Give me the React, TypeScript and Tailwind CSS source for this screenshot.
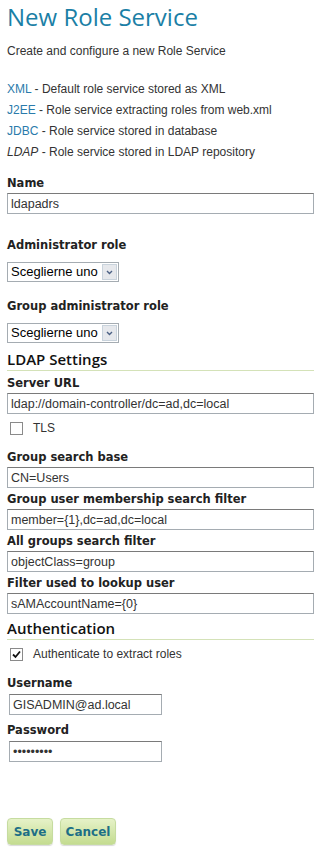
import { useState } from "react";

const body = "font-['Liberation_Sans',sans-serif]";
const label = "block font-['DejaVu_Sans',sans-serif] text-[11.5px] font-bold text-[#222] leading-[14px]";
const field =
  "block h-[21px] border border-[#a5acb2] border-t-[#7a7a7a] bg-white px-[3px] font-['Liberation_Sans',sans-serif] text-[12.5px] text-[#333] outline-none";

function Select() {
  return (
    <div className="flex h-[20px] w-[112px] items-stretch border border-[#a5acb2] bg-white">
      <span className="flex-1 pl-[3px] font-['Liberation_Sans',sans-serif] text-[13px] leading-[18px] text-black">
        Sceglierne uno
      </span>
      <span className="m-px flex w-[15px] items-center justify-center border border-[#c9d3dc] bg-[#e6e8ec]">
        <svg width="7" height="5" viewBox="0 0 7 5">
          <path d="M1 1 L3.5 3.5 L6 1" fill="none" stroke="#4d6185" strokeWidth="1.4" />
        </svg>
      </span>
    </div>
  );
}

function Check({ checked, text }: { checked?: boolean; text: string }) {
  return (
    <div className="flex items-center gap-[10px] pl-[3px]">
      <span className="flex h-[13px] w-[13px] items-center justify-center border border-[#8a8a8a] bg-white">
        {checked && (
          <svg width="9" height="9" viewBox="0 0 9 9">
            <path d="M1 4.5 L3.5 7 L8 1.5" fill="none" stroke="#111" strokeWidth="1.8" />
          </svg>
        )}
      </span>
      <span className={`${body} text-[12px] text-[#333]`}>{text}</span>
    </div>
  );
}

function Section({ title }: { title: string }) {
  return (
    <div className="border-b border-[#d4e2b8] pb-[1px]">
      <h3 className="font-['Open_Sans',sans-serif] text-[15px] font-semibold leading-[20px] text-[#111]">{title}</h3>
    </div>
  );
}

function Field({ name, value, gap = "mt-[4px]" }: { name: string; value: string; gap?: string }) {
  return (
    <div className={gap}>
      <label className={label}>{name}</label>
      <input className={`${field} mt-[3px] w-[307px]`} defaultValue={value} />
    </div>
  );
}

const btn =
  "h-[27px] rounded-[4px] border border-[#c6dca0] bg-gradient-to-b from-[#e6f2c8] to-[#c4dc90] font-['DejaVu_Sans',sans-serif] text-[12px] font-bold text-[#1d6f86] shadow-[0_1px_1px_rgba(0,0,0,0.15)]";

export default function App() {
  const [pw] = useState("secretpwd");
  return (
    <div className={`min-h-[854px] w-[328px] bg-white pl-[7px] pr-[14px] pt-0 ${body}`}>
      <h1 className="font-['Open_Sans',sans-serif] text-[24px] leading-[34px] text-[#1b7fa6]">New Role Service</h1>
      <p className="mt-[9px] text-[12px] leading-[16px] text-[#333]">Create and configure a new Role Service</p>

      <ul className="mt-[22px] flex flex-col gap-[5px] text-[12px] leading-[16px] text-[#333]">
        <li>
          <span className="text-[#2a7bab]">XML</span> - Default role service stored as XML
        </li>
        <li>
          <span className="text-[#2a7bab]">J2EE</span> - Role service extracting roles from web.xml
        </li>
        <li>
          <span className="text-[#2a7bab]">JDBC</span> - Role service stored in database
        </li>
        <li>
          <span className="italic">LDAP</span> - Role service stored in LDAP repository
        </li>
      </ul>

      <Field name="Name" value="ldapadrs" gap="mt-[16px]" />

      <div className="mt-[24px]">
        <label className={label}>Administrator role</label>
        <div className="mt-[10px]">
          <Select />
        </div>
      </div>

      <div className="mt-[17px]">
        <label className={label}>Group administrator role</label>
        <div className="mt-[10px]">
          <Select />
        </div>
      </div>

      <div className="mt-[6px]">
        <Section title="LDAP Settings" />
      </div>

      <Field name="Server URL" value="ldap://domain-controller/dc=ad,dc=local" gap="mt-[5px]" />
      <div className="mt-[5px]">
        <Check text="TLS" />
      </div>

      <Field name="Group search base" value="CN=Users" gap="mt-[13px]" />
      <Field name="Group user membership search filter" value="member={1},dc=ad,dc=local" />
      <Field name="All groups search filter" value="objectClass=group" />
      <Field name="Filter used to lookup user" value="sAMAccountName={0}" />

      <div className="mt-[4px]">
        <Section title="Authentication" />
      </div>
      <div className="mt-[5px]">
        <Check checked text="Authenticate to extract roles" />
      </div>

      <div className="mt-[13px]">
        <label className={label}>Username</label>
        <input className={`${field} ml-[2px] mt-[4px] w-[153px]`} defaultValue="GISADMIN@ad.local" />
      </div>
      <div className="mt-[8px]">
        <label className={label}>Password</label>
        <input type="password" className={`${field} ml-[2px] mt-[4px] w-[153px]`} defaultValue={pw} />
      </div>

      <div className="mt-[56px] flex gap-[7px]">
        <button className={`${btn} w-[46px]`}>Save</button>
        <button className={`${btn} w-[56px]`}>Cancel</button>
      </div>
    </div>
  );
}
